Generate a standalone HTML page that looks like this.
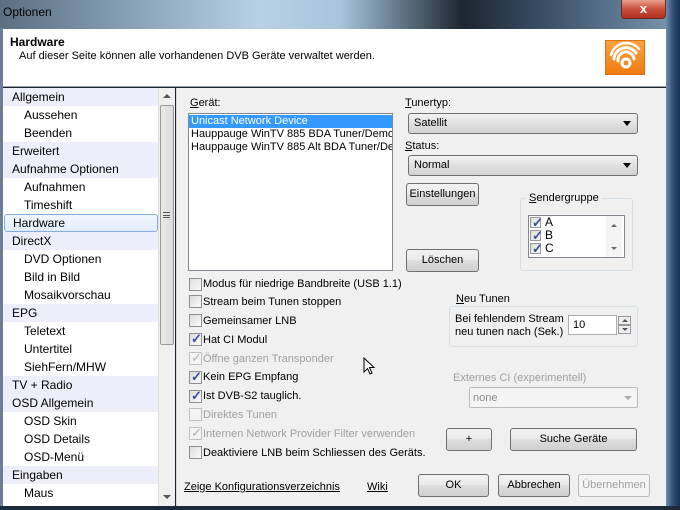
<!DOCTYPE html>
<html><head><meta charset="utf-8"><style>
*{box-sizing:border-box;margin:0;padding:0}
body{width:680px;height:510px;overflow:hidden;position:relative;font-family:"Liberation Sans",sans-serif;font-size:11px;color:#000;background:#1a2430}
.a{position:absolute}
.title{left:0;top:0;width:680px;height:30px;background:linear-gradient(90deg,#5b6f80 0%,#8aa3b8 20%,#b8d0e4 38%,#a8c4dc 50%,#1c2630 68%,#3a4f66 80%,#7c98b4 100%)}
.frameR{left:666px;top:0;width:14px;height:510px;background:linear-gradient(90deg,#6f8dab,#2f4f78 50%,#16304f)}
.frameL{left:0;top:28px;width:3px;height:482px;background:#6a8096}
.frameB{left:0;top:506px;width:680px;height:4px;background:#1c2a3a}
.hdr{left:3px;top:29px;width:663px;height:58px;background:#fff;border-bottom:1px solid #a0a0a0}
.tree{left:3px;top:88px;width:172px;height:418px;background:#fff;font-size:12px}
.row{position:absolute;left:0;width:155px;height:18px;line-height:18px}
.cat{background:#eeeefa;padding-left:9px}
.sub{padding-left:21px}
.sb{left:158px;top:88px;width:17px;height:418px;background:#f0f0f0;border-left:1px solid #e0e0e0}
.panel{left:176px;top:88px;width:490px;height:418px;background:#f0f0f0;border-left:1px solid #d8d8d8}
.btn{position:absolute;border:1px solid #707070;border-radius:3px;background:linear-gradient(#f2f2f2 0%,#ebebeb 45%,#dddddd 50%,#cfcfcf 100%);text-align:center;line-height:20px}
.combo{position:absolute;border:1px solid #707070;border-radius:3px;background:linear-gradient(#f2f2f2,#e0e0e0 50%,#d2d2d2);line-height:18px;padding-left:5px}
.combo:after{content:"";position:absolute;right:6px;top:7px;border-left:4px solid transparent;border-right:4px solid transparent;border-top:5px solid #000}
.cb{position:absolute;left:189px;width:13px;height:13px;border:1px solid #8e8f8f;background:linear-gradient(135deg,#dcdcdc,#fafafa)}
.cl{position:absolute;left:203px;line-height:14px}
.chk:after{content:"✓";position:absolute;left:1px;top:-3px;font-size:13px;font-weight:bold;color:#3a4e9a}
.dis{color:#a0a0a0}
.dchk:after{content:"✓";position:absolute;left:1px;top:-3px;font-size:13px;color:#b0b0b0}
.grp{position:absolute;border:1px solid #d5dfe5;border-radius:3px}
.u{text-decoration:underline}
</style></head><body>
<div class="a title"></div>
<div class="a" style="left:3px;top:5px;color:#000;font-size:12px">Optionen</div>
<div class="a" style="left:621px;top:0;width:45px;height:19px;border:1px solid #6b2a22;border-top:none;border-radius:0 0 4px 4px;background:linear-gradient(#e8a090,#c8503a 50%,#b03020);color:#fff;font-weight:bold;text-align:center;line-height:17px;font-size:13px">x</div>
<div class="a frameR"></div><div class="a frameL"></div><div class="a frameB"></div>
<div class="a hdr"></div>
<div class="a" style="left:10px;top:35px;font-weight:bold;font-size:12px">Hardware</div>
<div class="a" style="left:19px;top:50px">Auf dieser Seite können alle vorhandenen DVB Geräte verwaltet werden.</div>
<div class="a" style="left:605px;top:40px;width:40px;height:35px;background:linear-gradient(#f9a240,#f07c10);border:1px solid #e07010">
<svg width="38" height="33" viewBox="0 0 38 33"><g fill="none" stroke="#fff" stroke-linecap="round"><circle cx="20" cy="22" r="4" stroke-width="3"/><path d="M12 20a8 8 0 0 1 16 -2" stroke-width="3"/><path d="M8 18a12 12 0 0 1 22 -6" stroke-width="3"/><path d="M5 14a16 16 0 0 1 28 -6" stroke-width="2.5"/></g></svg></div>

<div class="a tree">
<div class="row cat" style="top:0">Allgemein</div>
<div class="row sub" style="top:18px">Aussehen</div>
<div class="row sub" style="top:36px">Beenden</div>
<div class="row cat" style="top:54px">Erweitert</div>
<div class="row cat" style="top:72px">Aufnahme Optionen</div>
<div class="row sub" style="top:90px">Aufnahmen</div>
<div class="row sub" style="top:108px">Timeshift</div>
<div class="row" style="top:126px;left:1px;width:154px;padding-left:8px;border:1px solid #84acdd;border-radius:3px;background:linear-gradient(#f2f7fd,#e2edfb);line-height:16px">Hardware</div>
<div class="row cat" style="top:144px">DirectX</div>
<div class="row sub" style="top:162px">DVD Optionen</div>
<div class="row sub" style="top:180px">Bild in Bild</div>
<div class="row sub" style="top:198px">Mosaikvorschau</div>
<div class="row cat" style="top:216px">EPG</div>
<div class="row sub" style="top:234px">Teletext</div>
<div class="row sub" style="top:252px">Untertitel</div>
<div class="row sub" style="top:270px">SiehFern/MHW</div>
<div class="row cat" style="top:288px">TV + Radio</div>
<div class="row cat" style="top:306px">OSD Allgemein</div>
<div class="row sub" style="top:324px">OSD Skin</div>
<div class="row sub" style="top:342px">OSD Details</div>
<div class="row sub" style="top:360px">OSD-Menü</div>
<div class="row cat" style="top:378px">Eingaben</div>
<div class="row sub" style="top:396px">Maus</div>
</div>
<div class="a sb">
<div class="a" style="left:4px;top:6px;border-left:4px solid transparent;border-right:4px solid transparent;border-bottom:4px solid #555"></div>
<div class="a" style="left:1px;top:17px;width:14px;height:240px;border:1px solid #9a9a9a;border-radius:2px;background:linear-gradient(90deg,#eaeaea,#dadada)"></div>
<div class="a" style="left:4px;top:124px;width:7px;height:6px;border-top:1px solid #555;border-bottom:1px solid #555"><div style="margin-top:2px;border-top:1px solid #555"></div></div>
<div class="a" style="left:4px;top:407px;border-left:4px solid transparent;border-right:4px solid transparent;border-top:4px solid #555"></div>
</div>

<div class="a panel"></div>
<div class="a" style="left:190px;top:97px"><span class="u">G</span>erät:</div>
<div class="a" style="left:188px;top:113px;width:205px;height:158px;background:#fff;border:1px solid #828790;overflow:hidden;white-space:nowrap;line-height:13px">
<div style="background:#3399ff;color:#fff;padding-left:2px;margin-top:1px">Unicast Network Device</div>
<div style="padding-left:2px">Hauppauge WinTV 885 BDA Tuner/Demod</div>
<div style="padding-left:2px">Hauppauge WinTV 885 Alt BDA Tuner/Dem</div></div>

<div class="a" style="left:405px;top:97px"><span class="u">T</span>unertyp:</div>
<div class="combo" style="left:408px;top:113px;width:230px;height:21px">Satellit</div>
<div class="a" style="left:405px;top:140px"><span class="u">S</span>tatus:</div>
<div class="combo" style="left:408px;top:155px;width:230px;height:21px">Normal</div>
<div class="btn" style="left:406px;top:183px;width:73px;height:23px">Einstellungen</div>
<div class="btn" style="left:406px;top:249px;width:73px;height:23px">Löschen</div>

<div class="grp" style="left:520px;top:198px;width:113px;height:73px"></div>
<div class="a" style="left:526px;top:192px;background:#f0f0f0;padding:0 3px"><span class="u">S</span>endergruppe</div>
<div class="a" style="left:528px;top:215px;width:97px;height:43px;background:#fff;border:1px solid #828790;line-height:13px">
<div style="position:absolute;right:2px;top:0;width:16px;height:41px;background:#f4f4f4"></div>
<div style="position:absolute;right:7px;top:8px;border-left:3px solid transparent;border-right:3px solid transparent;border-bottom:3px solid #666"></div>
<div style="position:absolute;right:7px;top:31px;border-left:3px solid transparent;border-right:3px solid transparent;border-top:3px solid #666"></div>
</div>
<div class="cb chk" style="left:530px;top:217px;width:11px;height:11px;border-color:#999"></div>
<div class="cb chk" style="left:530px;top:230px;width:11px;height:11px;border-color:#999"></div>
<div class="cb chk" style="left:530px;top:243px;width:11px;height:11px;border-color:#999"></div>
<div class="a" style="left:545px;top:216px;line-height:13px;background:#fff;font-size:12px">A<br>B<br>C</div>

<div class="cb" style="top:278px"></div><div class="cl" style="top:277px">Modus für niedrige Bandbreite (USB 1.1)</div>
<div class="cb" style="top:295px"></div><div class="cl" style="top:295px">Stream beim Tunen stoppen</div>
<div class="cb" style="top:314px"></div><div class="cl" style="top:314px">Gemeinsamer LNB</div>
<div class="cb chk" style="top:333px"></div><div class="cl" style="top:333px">Hat CI Modul</div>
<div class="cb dchk" style="top:352px;border-color:#c0c0c0;background:#f4f4f4"></div><div class="cl dis" style="top:352px">Öffne ganzen Transponder</div>
<div class="cb chk" style="top:371px"></div><div class="cl" style="top:370px">Kein EPG Empfang</div>
<div class="cb chk" style="top:390px"></div><div class="cl" style="top:389px">Ist DVB-S2 tauglich.</div>
<div class="cb" style="top:408px;border-color:#c0c0c0;background:#f4f4f4"></div><div class="cl dis" style="top:408px">Direktes Tunen</div>
<div class="cb dchk" style="top:427px;border-color:#c0c0c0;background:#f4f4f4"></div><div class="cl dis" style="top:427px">Internen Network Provider Filter verwenden</div>
<div class="cb" style="top:446px"></div><div class="cl" style="top:446px">Deaktiviere LNB beim Schliessen des Geräts.</div>

<svg class="a" style="left:363px;top:357px" width="14" height="20" viewBox="0 0 14 20"><path d="M1 1 L1 15 L4.5 11.5 L7 17 L9 16 L6.5 10.5 L11 10.5 Z" fill="#fff" stroke="#000" stroke-width="1"/></svg>

<div class="grp" style="left:449px;top:306px;width:189px;height:41px"></div>
<div class="a" style="left:454px;top:293px;background:#f0f0f0;padding:0 2px"><span class="u">N</span>eu Tunen</div>
<div class="a" style="left:455px;top:313px;line-height:13px">Bei fehlendem Stream<br>neu tunen nach (Sek.)</div>
<div class="a" style="left:568px;top:315px;width:49px;height:20px;background:#fff;border:1px solid #abadb3;padding:3px 0 0 4px">10</div>
<div class="a" style="left:618px;top:316px;width:13px;height:9px;border:1px solid #999;background:#eee"></div>
<div class="a" style="left:618px;top:325px;width:13px;height:9px;border:1px solid #999;background:#eee"></div>
<div class="a" style="left:622px;top:319px;border-left:3px solid transparent;border-right:3px solid transparent;border-bottom:3px solid #556"></div>
<div class="a" style="left:622px;top:328px;border-left:3px solid transparent;border-right:3px solid transparent;border-top:3px solid #556"></div>

<div class="a dis" style="left:453px;top:372px">Externes CI (experimentell)</div>
<div class="a" style="left:469px;top:387px;width:169px;height:21px;border:1px solid #bcbcbc;border-radius:2px;background:#f4f4f4;color:#8a8a8a;padding:4px 0 0 3px">none</div>
<div class="a" style="left:624px;top:396px;border-left:4px solid transparent;border-right:4px solid transparent;border-top:4px solid #aaa"></div>

<div class="btn" style="left:446px;top:428px;width:46px;height:23px">+</div>
<div class="btn" style="left:510px;top:428px;width:127px;height:23px">Suche Geräte</div>

<div class="a u" style="left:184px;top:481px">Zeige Konfigurationsverzeichnis</div>
<div class="a u" style="left:367px;top:481px">Wiki</div>
<div class="btn" style="left:418px;top:474px;width:71px;height:23px">OK</div>
<div class="btn" style="left:498px;top:474px;width:72px;height:23px">Abbrechen</div>
<div class="btn" style="left:578px;top:474px;width:72px;height:23px;border-color:#b8b8b8;background:#f4f4f4;color:#a0a0a0">Übernehmen</div>
</body></html>
